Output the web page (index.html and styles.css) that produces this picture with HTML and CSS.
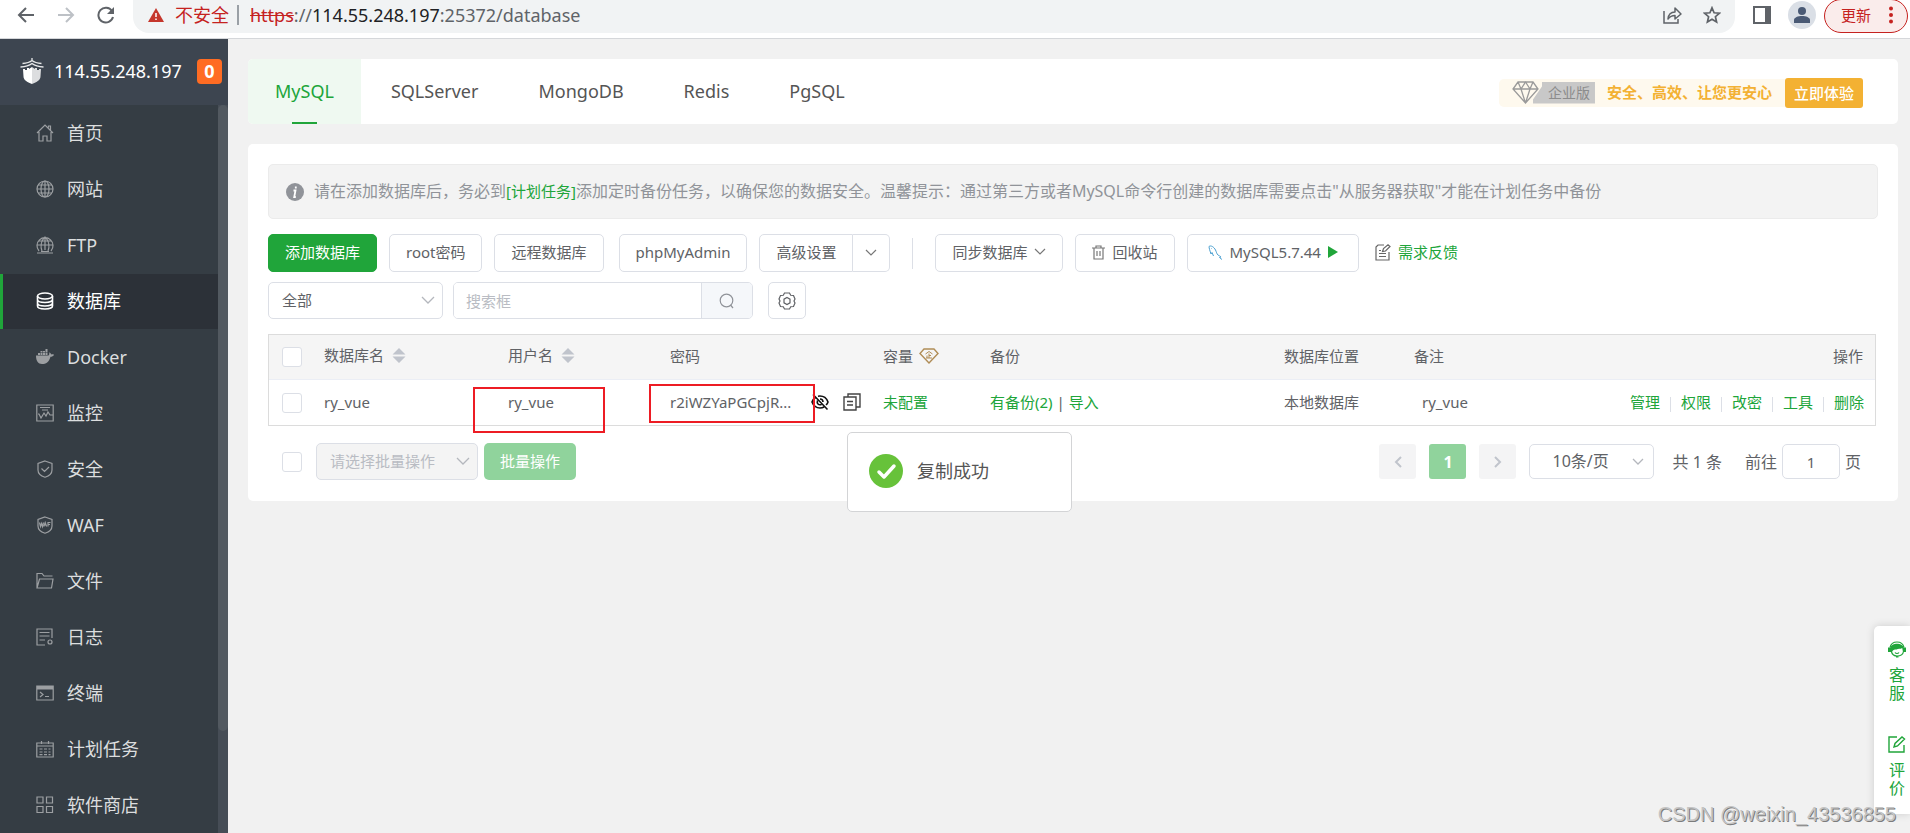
FILE: index.html
```html
<!DOCTYPE html>
<html lang="zh-CN">
<head>
<meta charset="utf-8">
<title>数据库</title>
<link rel="stylesheet" href="styles.css">
</head>
<body>
<header class="browser">
  <div class="nav-buttons">
    <button class="icon-btn" aria-label="后退"><svg width="18" height="18" viewBox="0 0 18 18" fill="none" stroke="#5f6368" stroke-width="2"><path d="M17 9H2M9 2L2 9l7 7"/></svg></button>
    <button class="icon-btn" aria-label="前进"><svg width="18" height="18" viewBox="0 0 18 18" fill="none" stroke="#bdc1c6" stroke-width="2"><path d="M1 9h15M9 2l7 7-7 7"/></svg></button>
    <button class="icon-btn" aria-label="刷新"><svg width="18" height="18" viewBox="0 0 18 18" fill="none" stroke="#5f6368" stroke-width="2"><path d="M15 5a7.4 7.4 0 1 0 1 6"/><path d="M17 1v7h-7z" fill="#5f6368" stroke="none"/></svg></button>
  </div>
  <div class="address">
    <svg width="16" height="14" viewBox="0 0 16 14"><path d="M8 0l8 14H0z" fill="#c5362c"/><path d="M8 5v4M8 10.5v1.6" stroke="#fff" stroke-width="1.5"/></svg>
    <span class="unsafe">不安全</span>
    <span class="address-sep"></span>
    <span class="url"><s>https</s>://<b>114.55.248.197</b>:25372/database</span>
    <span class="address-tools">
      <button class="icon-btn" aria-label="分享"><svg width="20" height="18" viewBox="0 0 20 18" fill="none" stroke="#5f6368" stroke-width="1.5"><path d="M1 5v12h14v-4"/><path d="M5 13c.5-5 3-7 7-7V2l6 6-6 5V9.500c-3 0-5 .8-7 3.500z" stroke-linejoin="round"/></svg></button>
      <button class="icon-btn" aria-label="收藏"><svg width="18" height="18" viewBox="0 0 18 18" fill="none" stroke="#5f6368" stroke-width="1.700"><path d="M9 1.800l2.100 5 5.300.4-4 3.500 1.200 5.300L9 13.200 4.400 16l1.200-5.300-4-3.500 5.300-.4z"/></svg></button>
    </span>
  </div>
  <button class="icon-btn" aria-label="侧边栏"><svg width="18" height="18" viewBox="0 0 18 18"><path d="M0 0h18v18H0zM2 2v14h10V2z" fill="#5f6368" fill-rule="evenodd"/></svg></button>
  <button class="icon-btn avatar" aria-label="用户"><svg width="16" height="16" viewBox="0 0 16 16" fill="#4a5a75"><circle cx="8" cy="4" r="4"/><path d="M0 16v-3c0-2.500 4-4 8-4s8 1.500 8 4v3z"/></svg></button>
  <button class="update">更新<svg width="4" height="18" viewBox="0 0 4 18" fill="#c5221f"><circle cx="2" cy="2.500" r="2"/><circle cx="2" cy="9" r="2"/><circle cx="2" cy="15.500" r="2"/></svg></button>
</header>

<div class="app">
  <aside class="sidebar">
    <div class="brand">
      <svg width="24" height="26" viewBox="0 0 24 26"><path d="M12 0v3M2.500 5.500Q9 5 12 2.500q3 2.500 9.500 3M.5 9Q8 8.500 12 5.500 16 8.500 23.500 9" fill="none" stroke="#e8e9ea" stroke-width="1.300"/><path d="M3 11h2v1h2v-2h2v1l3-2v17c-5-2-8.500-4-8.500-7.500z" fill="#fff"/><path d="M21 11h-2v1h-2v-2h-2v1l-3-2v17c5-2 8.500-4 8.500-7.500z" fill="#dcdddf"/></svg>
      <span class="host">114.55.248.197</span><span class="count">0</span>
    </div>
    <div class="menu-area">
      <nav class="menu">
        <a href="#"><svg viewBox="0 0 18 18"><path d="M1 9l8-8 8 8M3 8v9h4v-5h4v5h4V8M12.500 3.500V2h2v4"/></svg>首页</a>
        <a href="#"><svg viewBox="0 0 18 18"><circle cx="9" cy="9" r="8"/><ellipse cx="9" cy="9" rx="4" ry="8"/><path d="M9 1v16M1 9h16M2 5h14M2 13h14"/></svg>网站</a>
        <a href="#"><svg viewBox="0 0 18 18"><path d="M3 15a8 8 0 1 1 12 0M6 15C4.500 11 4.500 5 9 1c4.500 4 4.500 10 3 14M9 1v13M1 9h16M2.500 5h13M1 17h16M5 15.500h8"/></svg>FTP</a>
        <a href="#" class="active"><svg viewBox="0 0 18 18"><ellipse cx="9" cy="4" rx="7.500" ry="3"/><path d="M1.500 4v10c0 4 15 4 15 0V4M1.500 7.500c0 4 15 4 15 0M1.500 11c0 4 15 4 15 0"/></svg>数据库</a>
        <a href="#"><svg viewBox="0 0 18 18"><path class="solid" d="M0 7.500h12.500c1-1 1-2 .5-3 1.500.2 2 1 2 2 1-.3 2-.3 3 .2-.6 1.500-2 2-3.500 2C13 14 10 16 6 16c-4 0-6-3-6-8.500zM2 5h2v2H2zM4.500 5h2v2h-2zM7 5h2v2H7zM9.500 5h2v2h-2zM4.500 3h2v1.600h-2zM7 3h2v1.600H7zM9.500 1h2v3.600h-2z"/></svg>Docker</a>
        <a href="#"><svg viewBox="0 0 18 18"><path d="M.8 1h16.400v16H.8zM4 3.500h10M6 6h6M2 10h1l2 4 3-5 2 3 2-4 2 3h3"/></svg>监控</a>
        <a href="#"><svg viewBox="0 0 18 18"><path d="M9 1l7 2.500V10c0 3.500-3 6-7 7.300C5 16 2 13.500 2 10V3.500zM5.500 8.500l3 3 4.500-4.500"/></svg>安全</a>
        <a href="#"><svg viewBox="0 0 18 18"><path d="M9 1l7 2.500V10c0 3.500-3 6-7 7.300C5 16 2 13.500 2 10V3.500z"/><path d="M3.500 6.500l1 4 1-3 1 3 1-4M7.800 10.500l1.400-4 1.400 4M8.500 9h1.500M12 10.500v-4h2.500M12 8.500h2"/></svg>WAF</a>
        <a href="#"><svg viewBox="0 0 18 18"><path d="M1 16V1.500h5L8 4h8.500M1 16L3.500 7H17l-1.500 9z"/></svg>文件</a>
        <a href="#"><svg viewBox="0 0 18 18"><path d="M9 17H1V1h15v9M3.500 4.500h10M3.500 8h10M3.500 12H9"/><circle cx="14" cy="14" r="2"/></svg>日志</a>
        <a href="#"><svg viewBox="0 0 18 18"><path d="M.8 2h16.400v14H.8zM4 8l3 2.500L4 13M9 12.500h4"/><path class="solid" d="M1 2h16v3.500H1z"/></svg>终端</a>
        <a href="#"><svg viewBox="0 0 18 18"><path d="M.8 3h16.400v14H.8zM.8 6h16.400M5.500 1v3M12.500 1v3M3.500 9h3M8 9h3M12.500 9h2M3.500 12h3M8 12h3M12.500 12h2M3.500 14.700h3M8 14.700h3M12.500 14.700h2"/></svg>计划任务</a>
        <a href="#"><svg viewBox="0 0 18 18"><path d="M1 1h6v6H1zM10.500 1h6v6h-6zM1 10.500h6v6H1zM10.500 10.500h6v6h-6z"/></svg>软件商店</a>
      </nav>
      <div class="track"><div class="thumb"></div></div>
    </div>
  </aside>

  <main class="content">
    <section class="card tabs-card">
      <div class="tabs" role="tablist">
        <button class="tab current" role="tab">MySQL</button>
        <button class="tab" role="tab">SQLServer</button>
        <button class="tab" role="tab">MongoDB</button>
        <button class="tab" role="tab">Redis</button>
        <button class="tab" role="tab">PgSQL</button>
      </div>
      <div class="promo">
        <div class="promo-info">
          <svg width="27" height="23" viewBox="0 0 27 23" fill="none" stroke="#9a9a9a" stroke-width="1.300"><path d="M6 1h15l5 7-12.500 14L1 8zM1 8h25M6 1l3 7 4.500 14L18 8l3-7M9 8l4.500-7L18 8"/></svg>
          <span class="edition">企业版</span>
          <strong>安全、高效、让您更安心</strong>
        </div>
        <button class="try">立即体验</button>
      </div>
    </section>

    <section class="card panel">
      <div class="notice">
        <svg width="18" height="18" viewBox="0 0 18 18"><circle cx="9" cy="9" r="9" fill="#909399"/><path d="M9.800 3.500v2M7.500 7.500h2L8.200 14h1.600" fill="none" stroke="#fff" stroke-width="1.800"/></svg>
        <p>请在添加数据库后，务必到<a href="#">[计划任务]</a>添加定时备份任务，以确保您的数据安全。温馨提示：通过第三方或者MySQL命令行创建的数据库需要点击"从服务器获取"才能在计划任务中备份</p>
      </div>

      <div class="toolbar">
        <button class="btn primary">添加数据库</button>
        <button class="btn">root密码</button>
        <button class="btn wide-gap">远程数据库</button>
        <button class="btn">phpMyAdmin</button>
        <div class="split"><button class="btn">高级设置</button><button class="btn arrow" aria-label="更多"><svg width="12" height="8" viewBox="0 0 12 8"><path d="M1 1l5 5 5-5"/></svg></button></div>
        <span class="rule"></span>
        <button class="btn">同步数据库<svg width="12" height="8" viewBox="0 0 12 8"><path d="M1 1l5 5 5-5"/></svg></button>
        <button class="btn"><svg width="13" height="15" viewBox="0 0 13 15"><path d="M0 3h13M4 3V1h5v2M2 3v11h9V3M5 6v5M8 6v5"/></svg>回收站</button>
        <button class="btn version"><svg width="15" height="15" viewBox="0 0 15 15" class="dolphin"><path d="M3 9C2 6 1 3 1 1.500 3 0 6 2 7.500 5c1 2 1 3.500 2.500 5 1 1 2.500 1 3 2l-1.500.5L14 14.500M3 9l1-1.500L5.500 11M3.500 3.500l.5.500"/></svg>MySQL5.7.44<svg width="10" height="12" viewBox="0 0 10 12" class="play"><path d="M0 0l10 6-10 6z"/></svg></button>
        <a href="#" class="feedback"><svg width="16" height="17" viewBox="0 0 16 17" fill="none" stroke="#666" stroke-width="1.200"><path d="M9 1H3L1 3v13h13V8M4 12.500h7M4 9.500h7M4 6.500h2M7.500 7.500l1-3L13 .8l2 1.700-4.500 4.500z"/></svg>需求反馈</a>
      </div>

      <div class="filters">
        <label class="select type-select"><select aria-label="分类"><option>全部</option></select><svg width="14" height="9" viewBox="0 0 14 9"><path d="M1 1l6 6 6-6"/></svg></label>
        <div class="search"><input type="text" placeholder="搜索框" aria-label="搜索"><button aria-label="搜索"><svg width="16" height="16" viewBox="0 0 16 16" fill="none" stroke="#909399" stroke-width="1.200"><circle cx="7.500" cy="7.500" r="6.300"/><path d="M11.500 12l2.500 3"/></svg></button></div>
        <button class="btn gear" aria-label="设置"><svg width="18" height="18" viewBox="0 0 18 18"><path d="M6.500 1h5l1.200 2.300 2.800.2L17 7l-1 2 1 2-1.500 3.500-2.800.2L11.500 17h-5l-1.200-2.300-2.800-.2L1 11l1-2-1-2 1.500-3.500 2.800-.2z"/><path d="M9 5.500l3 1.700v3.600l-3 1.700-3-1.700V7.200z"/></svg></button>
      </div>

      <table class="data">
        <colgroup><col class="c-check"><col class="c-name"><col class="c-user"><col class="c-pass"><col class="c-size"><col class="c-backup"><col class="c-place"><col class="c-note"><col></colgroup>
        <thead><tr>
          <th><input type="checkbox" aria-label="全选"></th>
          <th class="sortable">数据库名<svg class="sort" width="14" height="15" viewBox="0 0 14 15"><path d="M7 0l6.500 6.500H.5zM7 15L.5 8.500h13z"/></svg></th>
          <th class="sortable">用户名<svg class="sort" width="14" height="15" viewBox="0 0 14 15"><path d="M7 0l6.500 6.500H.5zM7 15L.5 8.500h13z"/></svg></th>
          <th>密码</th>
          <th>容量<svg class="gem" width="20" height="16" viewBox="0 0 20 16" fill="none" stroke="#b08d57" stroke-width="1.400"><path d="M5 1h10l4 4.500L10 15 1 5.500z"/><path stroke-width="1" d="M6.500 6L10 3.500 13.500 6M10 5.500V10M8 7.500V10M10 7.500h2M7 10h6"/></svg></th>
          <th>备份</th><th>数据库位置</th><th>备注</th><th class="right">操作</th>
        </tr></thead>
        <tbody><tr>
          <td><input type="checkbox" aria-label="选择 ry_vue"></td>
          <td>ry_vue</td>
          <td class="marked">ry_vue<span class="mark mark-user"></span></td>
          <td class="marked"><div class="password"><span>r2iWZYaPGCpjR...</span>
            <button class="icon-btn" aria-label="显示密码"><svg width="18" height="18" viewBox="0 0 18 18" fill="none" stroke="#111" stroke-width="1.600"><path d="M4.500 4.500C2.500 5.800 1.500 7.500 1 9c1.500 4 4.500 6 8 6 1.500 0 3-.4 4-1M7 3.200C12 2.500 15.500 5 17 9c-.4 1.200-1 2.200-2 3M2 1.500l14.500 15M6.500 7.500c-1 3 1 5 4 4M9 6c2 0 3 1 3 3"/></svg></button>
            <button class="icon-btn" aria-label="复制"><svg width="18" height="18" viewBox="0 0 18 18" fill="none" stroke="#444" stroke-width="1.400"><path d="M1 4h12v13H1zM5 4V1h12v13h-4M4 8.500h6M4 12h6"/></svg></button></div><span class="mark mark-pass"></span></td>
          <td><a href="#">未配置</a></td>
          <td><a href="#">有备份(2)</a> | <a href="#">导入</a></td>
          <td>本地数据库</td><td class="note">ry_vue</td>
          <td><div class="ops"><a href="#">管理</a><a href="#">权限</a><a href="#">改密</a><a href="#">工具</a><a href="#">删除</a></div></td>
        </tr></tbody>
      </table>

      <div class="footer">
        <input type="checkbox" aria-label="全选">
        <label class="select batch-select"><select disabled aria-label="批量操作"><option>请选择批量操作</option></select><svg width="14" height="9" viewBox="0 0 14 9"><path d="M1 1l6 6 6-6"/></svg></label>
        <button class="btn batch" disabled>批量操作</button>
        <div class="pager">
          <button class="page" aria-label="上一页" disabled><svg width="8" height="12" viewBox="0 0 8 12"><path d="M7 1L2 6l5 5"/></svg></button>
          <button class="page on">1</button>
          <button class="page" aria-label="下一页" disabled><svg width="8" height="12" viewBox="0 0 8 12"><path d="M1 1l5 5-5 5"/></svg></button>
          <label class="select size-select"><select aria-label="每页条数"><option>10条/页</option></select><svg width="12" height="8" viewBox="0 0 12 8"><path d="M1 1l5 5 5-5"/></svg></label>
          <span class="total">共 1 条</span>
          <label class="jump">前往<input type="text" value="1">页</label>
        </div>
      </div>
    </section>
  </main>
</div>

<div class="toast" role="status"><svg width="34" height="34" viewBox="0 0 34 34"><circle cx="17" cy="17" r="17" fill="#67c23a"/><path d="M10 18l5 5 10-11" fill="none" stroke="#fff" stroke-width="3.500" stroke-linecap="round" stroke-linejoin="round"/></svg>复制成功</div>

<aside class="side-help">
  <a href="#"><svg width="18" height="17" viewBox="0 0 18 17"><path d="M2 6.500a7.200 7.200 0 0 1 14 0" fill="none" stroke="#20a53a" stroke-width="1.200"/><path d="M0 6.500h2.500C3.500 1.500 14.500 1.500 15.500 6.500H18V11h-3l-.8-4c-2 1.500-4 .3-5.700 1.500C7 8.500 5 8.500 4 11H0z" fill="#20a53a"/><path d="M3.500 11c.8 2.500 2.800 4 5.500 4 3.500 0 6-1.500 6.500-4.500M7 11.500c1 1.300 3 1.300 4 0M8 15.800h2.500" fill="none" stroke="#20a53a" stroke-width="1.200"/></svg><span>客服</span></a>
  <a href="#"><svg width="18" height="17" viewBox="0 0 18 17" fill="none" stroke="#20a53a" stroke-width="1.400"><path d="M9 1H1v15h15V9M6 11l1-3.500 7-6.500 2.500 2-7 7z"/></svg><span>评价</span></a>
</aside>
<div class="watermark">CSDN @weixin_43536855</div>
</body>
</html>
```
FILE: styles.css
```css
* { box-sizing: border-box; }
body {
  margin: 0;
  height: 100vh;
  display: flex;
  flex-direction: column;
  overflow: hidden;
  background: #f1f1f1;
  color: #606266;
  font: 15px/20px "Noto Sans", "Noto Sans CJK SC", sans-serif;
}
button, input, select { font: inherit; color: inherit; margin: 0; }
button { cursor: pointer; }
a { color: #20a53a; text-decoration: none; }
svg { display: block; flex: none; }
.icon-btn { padding: 0; border: 0; background: none; }

/* browser bar */
.browser {
  flex: none;
  height: 39px;
  display: flex;
  align-items: flex-start;
  padding-left: 17px;
  padding-right: 2px;
  background: #fff;
  border-bottom: 1px solid #d5d7da;
}
.browser > .icon-btn { margin-top: 6px; }
.nav-buttons { display: flex; gap: 22px; width: 116px; padding-top: 6px; }
.address {
  flex: 1;
  display: flex;
  align-items: center;
  height: 33px;
  margin-right: 18px;
  padding: 0 14px 3px 15px;
  background: #f1f3f4;
  border-radius: 0 0 16px 16px;
  font-size: 18px;
  color: #5f6368;
}
.unsafe { margin-left: 11px; color: #c5221f; }
.address-sep { width: 2px; height: 20px; margin: 0 11px 0 8px; background: #9aa0a6; }
.url s { color: #c5221f; }
.url b { font-weight: 400; color: #202124; }
.address-tools { margin-left: auto; display: flex; gap: 20px; }
.browser > .avatar {
  width: 28px;
  height: 28px;
  margin: 1px 8px 0 17px;
  display: grid;
  place-items: center;
  border-radius: 50%;
  background: #dadfe6;
}
.update {
  height: 34px;
  width: 84px;
  margin-top: -1px;
  padding: 0 14px 2px 16px;
  display: flex;
  align-items: center;
  justify-content: space-between;
  border: 1px solid #c5221f;
  border-radius: 17px;
  background: #faeceb;
  color: #c5221f;
}

/* shell */
.app { flex: 1; min-height: 0; display: flex; }
.sidebar { flex: none; width: 228px; display: flex; flex-direction: column; background: #353d44; }
.brand {
  flex: none;
  height: 66px;
  padding: 0 6px 2px 20px;
  display: flex;
  align-items: center;
  background: #3d4550;
  color: #fff;
  font-size: 18px;
}
.host { margin-left: 10px; }
.count {
  width: 25px;
  height: 25px;
  margin-left: auto;
  border-radius: 4px;
  background: #ff6c23;
  font-weight: 700;
  line-height: 25px;
  text-align: center;
}
.menu-area { flex: 1; min-height: 0; display: flex; }
.menu { flex: 1; overflow: hidden; }
.menu a {
  display: flex;
  align-items: center;
  gap: 13px;
  height: 55px;
  margin-top: 1px;
  padding: 0 0 1px 33px;
  border-left: 3px solid transparent;
  color: #dcdedf;
  font-size: 18px;
}
.menu svg { width: 18px; height: 18px; fill: none; stroke: #9c9fa2; stroke-width: 1.2; }
.menu .solid { fill: #9c9fa2; stroke: none; }
.menu .active { border-color: #20a53a; background: #2c3138; color: #fff; }
.menu .active svg { stroke: #fff; stroke-width: 1.6; }
.track { width: 10px; background: #464d56; }
.thumb { height: 86%; border-radius: 5px; background: #525960; }

.content { flex: 1; min-width: 0; padding: 20px 12px 0 20px; }
.card { background: #fff; border-radius: 5px; }

/* database tabs */
.tabs-card { display: flex; justify-content: space-between; align-items: center; height: 65px; margin-bottom: 20px; padding-right: 35px; overflow: hidden; }
.tabs { display: flex; height: 65px; }
.tab { border: 0; background: none; padding: 0 30px 2px; font-size: 18px; color: #555; }
.tab.current {
  padding: 0 27px 2px;
  color: #20a53a;
  background: linear-gradient(#20a53a, #20a53a) center bottom / 25px 2px no-repeat #eff9f1;
}
.promo { display: flex; align-items: center; padding-top: 2px; }
.promo-info { display: flex; align-items: center; height: 28px; padding: 0 13px; border-radius: 5px 0 0 5px; background: #fef9ee; }
.promo-info strong { margin-left: 12px; padding-bottom: 1px; color: #f3b133; }
.edition {
  height: 22px;
  margin-left: -6px;
  padding: 0 5px 0 15px;
  background: #c8c8c8;
  clip-path: polygon(9px 0, 100% 0, 100% 100%, 0 100%, 0 18px, 9px 5px);
  color: #8c8c8c;
  font-size: 14px;
  line-height: 22px;
}
.try { height: 30px; padding: 0 9px; border: 0; border-radius: 3px; background: #f3b133; color: #fff; font-weight: 500; }

/* main panel */
.panel { padding: 20px 20px 21px; }
.notice {
  display: flex;
  align-items: center;
  gap: 10px;
  min-height: 55px;
  margin-bottom: 15px;
  padding: 0 17px;
  border: 1px solid #ebebeb;
  border-radius: 5px;
  background: #f3f3f3;
  color: #909399;
  font-size: 16px;
}
.notice p { margin: 0; padding-bottom: 1px; }
.notice a { font-size: 15px; }

.btn {
  height: 38px;
  display: flex;
  align-items: center;
  gap: 7px;
  padding: 0 16px 2px;
  border: 1px solid #dcdfe6;
  border-radius: 5px;
  background: #fff;
  white-space: nowrap;
}
.btn svg { fill: none; stroke: #777; stroke-width: 1.2; }
.btn.primary { border-color: #20a53a; background: #20a53a; color: #fff; }
.toolbar { display: flex; align-items: center; gap: 12px; margin-bottom: 10px; }
.wide-gap { margin-right: 3px; }
.split { display: flex; }
.split .btn:first-child { border-radius: 5px 0 0 5px; }
.split .arrow { padding: 0 12px; border-left: 0; border-radius: 0 5px 5px 0; }
.rule { width: 1px; height: 31px; margin: 0 10px; background: #dcdfe6; }
.btn.version { padding: 0 20px 2px; }
.btn .dolphin { stroke: #4a9fd0; stroke-width: 1; }
.btn .play { fill: #20a53a; stroke: none; }
.feedback { display: flex; align-items: center; gap: 7px; margin-left: 4px; padding-bottom: 2px; }

.filters { display: flex; gap: 10px; height: 37px; margin-bottom: 15px; }
.select { position: relative; display: block; height: 37px; }
.select select {
  width: 100%;
  height: 100%;
  padding: 0 13px 2px;
  border: 1px solid #dcdfe6;
  border-radius: 5px;
  background: #fff;
  appearance: none;
  opacity: 1;
}
.select svg { position: absolute; right: 8px; top: 14px; fill: none; stroke: #b4b7bd; stroke-width: 1.3; pointer-events: none; }
.type-select { width: 175px; }
.search { display: flex; width: 300px; margin-right: 5px; border: 1px solid #dcdfe6; border-radius: 5px; overflow: hidden; }
.search input { flex: 1; min-width: 0; padding: 0 12px; border: 0; }
.search input::placeholder { color: #b9bcc3; }
.search button { width: 51px; display: grid; place-items: center; border: 0; border-left: 1px solid #dcdfe6; background: #f5f7fa; }
.btn.gear { height: 37px; width: 38px; padding: 0 9px; }
.btn.gear svg { stroke: #606266; }

/* checkboxes */
input[type="checkbox"] {
  appearance: none;
  display: block;
  width: 20px;
  height: 20px;
  border: 1px solid #dcdfe6;
  border-radius: 3px;
  background: #fff;
}

/* table */
.data { width: calc(100% - 2px); table-layout: fixed; border-collapse: separate; border-spacing: 0; border: 1px solid #dcdcdc; }
.data th, .data td { height: 45px; padding: 0 10px 2px; font-weight: 400; text-align: left; white-space: nowrap; }
.data th { background: #f5f5f5; border-bottom: 1px solid #ebeef5; }
.data th:first-child, .data td:first-child { padding: 0 13px; }
.data .sortable { padding-bottom: 4px; }
.c-check { width: 45px; }
.c-name { width: 184px; }
.c-user { width: 162px; }
.c-pass { width: 213px; }
.c-size { width: 107px; }
.c-backup { width: 294px; }
.c-place { width: 130px; }
.c-note { width: 160px; }
.data .right { text-align: right; padding-right: 12px; }
.sort, .gem { display: inline-block; margin-left: 8px; vertical-align: -2px; }
.sort { fill: #c0c4cc; }
.gem { margin-left: 6px; }
.data .note { padding-left: 18px; }
.password { display: flex; align-items: center; gap: 14px; }
.password span { width: 127px; }
.marked { position: relative; }
.mark { position: absolute; border: 2px solid #ed1c24; pointer-events: none; }
.mark-user { left: -25px; top: 7px; width: 132px; height: 46px; }
.mark-pass { left: -11px; top: 4px; width: 166px; height: 39px; }
.ops { display: flex; justify-content: flex-end; padding-right: 1px; }
.ops a + a { margin-left: 10px; padding-left: 11px; background: linear-gradient(#dcdfe6, #dcdfe6) left bottom / 1px 15px no-repeat; }

/* table footer */
.footer { display: flex; align-items: center; margin-top: 17px; padding: 0 17px 0 14px; }
.batch-select { width: 162px; margin-left: 14px; }
.batch-select select { background: #f4f4f4; color: #b9bcc3; }
.btn.batch { height: 37px; margin-left: 6px; padding: 0 16px 1px; border: 0; background: #90d39c; color: #fff; }
.pager { margin-left: auto; display: flex; align-items: center; font-size: 16px; }
.page { width: 37px; height: 35px; margin-right: 13px; display: grid; place-items: center; padding: 0; border: 0; border-radius: 3px; background: #f4f4f5; }
.page svg { fill: none; stroke: #c0c4cc; stroke-width: 2; }
.page.on { background: #90d39c; color: #fff; font-weight: 700; }
.size-select { width: 125px; height: 35px; }
.size-select select { padding-left: 22px; }
.size-select svg { right: 10px; }
.total { margin: 0 23px 0 18px; }
.jump { display: flex; align-items: center; gap: 5px; }
.jump input { width: 58px; height: 35px; padding: 0; border: 1px solid #dcdfe6; border-radius: 5px; text-align: center; font-size: 15px; }

/* floating layers */
.toast {
  position: absolute;
  left: calc(50% - 108px);
  top: 432px;
  width: 225px;
  height: 80px;
  display: flex;
  align-items: center;
  gap: 14px;
  padding: 0 21px 2px;
  border: 1px solid #d3d4d6;
  border-radius: 5px;
  background: #fff;
  color: #555;
  font-size: 18px;
}
.side-help {
  position: absolute;
  right: 0;
  bottom: 19px;
  width: 36px;
  height: 188px;
  padding: 15px 4px 0 14px;
  display: flex;
  flex-direction: column;
  gap: 34px;
  border-radius: 5px 0 0 5px;
  background: #fff;
  box-shadow: 0 0 8px rgba(0, 0, 0, .15);
}
.side-help a { display: grid; gap: 8px; font-size: 16px; line-height: 18px; }
.side-help span { width: 18px; padding-left: 1px; }
.watermark {
  position: absolute;
  right: 14px;
  bottom: 7px;
  font: 20px/24px "Liberation Sans", sans-serif;
  color: #c4c4c4;
  text-shadow: 1px 1px 0 #7c7c7c;
}
```
